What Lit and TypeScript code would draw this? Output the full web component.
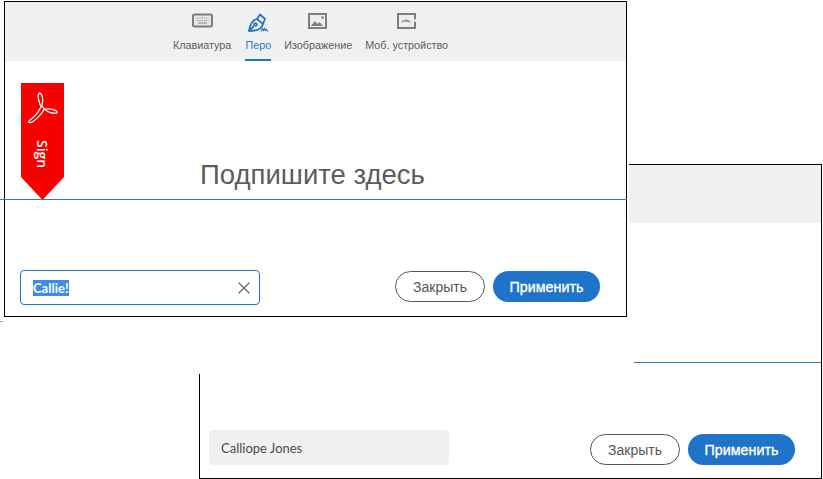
import { LitElement, html, css, svg } from "lit";
import { customElement } from "lit/decorators.js";

const icons: Record<string, unknown> = {
  kb: svg`<rect x="1" y="1.5" width="19" height="12" rx="1.5" fill="#e8e8e8" stroke="#7d7d7d" stroke-width="2"/><path d="M4.5 5h12M4.5 7.5h12" stroke="#999" stroke-width="1.2" stroke-dasharray="1.2 .7"/><path d="M6 10h9" stroke="#999" stroke-width="1.2"/>`,
  pen: svg`<g fill="none" stroke="#2b73c4" stroke-width="1.8" stroke-linejoin="round"><path d="M1 18C2 11 5 7 9 6L15 11C14 15 10 18 1 18Z"/><path d="M1 18l5-5"/><circle cx="7.5" cy="11.5" r="1.4"/><path d="M9 6L12 1.5L17 6L15 11"/></g><path d="M13 18.5l1.5-3 1 2 1-2 1 2 1-1 1.5 2" fill="none" stroke="#2b73c4" stroke-width="1.2"/>`,
  img: svg`<rect x="1" y="1" width="17" height="14" fill="#eee" stroke="#7d7d7d" stroke-width="2"/><path d="M3 13l4-5 2.5 3 2-2 3.5 4z" fill="#7d7d7d"/><circle cx="14.5" cy="4.5" r="1.3" fill="#7d7d7d"/>`,
  tab: svg`<rect x="2" y="1" width="17" height="14" fill="#eee" stroke="#7d7d7d" stroke-width="2"/><path d="M6 9.5l1.5-2.5 1 2 1.5-2.5 1 2.5 1-2 1 2 1.5-.5" fill="none" stroke="#7d7d7d" stroke-width="1"/><rect x="18" y="6" width="2" height="3" fill="#ddd"/>`,
};

@customElement("app-root")
export class AppRoot extends LitElement {
  static styles = css`
    :host { display: block; position: relative; width: 823px; height: 479px; overflow: hidden; background: #fff; font-family: "Liberation Sans", Arial, sans-serif; }
    .win { position: absolute; box-sizing: border-box; background: #fff; }
    .back { left: 199px; top: 164px; width: 623px; height: 315px; border: 1px solid #000; display: flex; flex-direction: column; }
    .back-head { height: 58px; flex: none; background: #f0f0f0; }
    .back-foot { margin-top: auto; display: flex; align-items: flex-end; justify-content: space-between; padding: 0 26px 13px 9px; }
    .mask { position: absolute; left: 199px; top: 164px; width: 430px; height: 210px; background: #fff; }
    .line { position: absolute; height: 1px; background: #2a7ab8; }
    .l1 { left: 0; top: 199px; width: 627px; z-index: 2; }
    .l2 { left: 634px; top: 362px; width: 187px; }
    .tick { position: absolute; left: 0; top: 321px; width: 3px; height: 1px; background: #999; }
    .front { left: 4px; top: 1px; width: 623px; height: 316px; border: 1px solid #000; display: flex; flex-direction: column; }
    .head { height: 59px; flex: none; background: #f0f0f0; display: flex; justify-content: center; gap: 13px; padding-right: 10px; box-sizing: border-box; }
    .tab { display: flex; flex-direction: column; align-items: center; font-size: 10.8px; color: #5c5c5c; height: 59px; box-sizing: border-box; border-bottom: 2px solid transparent; }
    .tab:first-child { margin-right: 1px; }
    .tab.on { color: #2b73c4; border-bottom-color: #1f73c7; }
    .ic { height: 20px; width: 21px; margin-top: 11px; }
    .tab span { margin-top: 6px; white-space: nowrap; }
    .main { flex: 1; position: relative; display: flex; flex-direction: column; }
    .sign { position: absolute; left: 16px; top: 22px; width: 43px; height: 117px; }
    .sign svg { position: absolute; inset: 0; }
    .sign b { position: absolute; left: 0; right: 0; top: 57px; display: flex; align-items: center; writing-mode: vertical-rl; font: 600 14px "Open Sans", sans-serif; color: #fff; }
    .hint { text-align: center; font-size: 27.5px; color: #5c5c5c; margin-top: 97px; line-height: 34px; padding-right: 6px; }
    .foot { margin-top: auto; display: flex; align-items: flex-end; justify-content: space-between; padding: 0 26px 11px 15px; }
    .foot .btns { margin-bottom: 3px; }
    .field { box-sizing: border-box; width: 240px; height: 35px; border-radius: 4px; display: flex; align-items: center; padding: 0 9px 0 12px; font: 13px Lato, sans-serif; color: #4b4b4b; }
    .field.edit { border: 1px solid #1f73c7; }
    .field.plain { background: #f0f0f0; }
    .field mark { background: #3d8af0; color: #fff; font-weight: 700; line-height: 16px; }
    .field svg { margin-left: auto; }
    .btns { display: flex; gap: 8px; }
    button { box-sizing: border-box; height: 31px; border-radius: 16px; font: 14px "Liberation Sans", Arial, sans-serif; padding: 0; }
    .ghost { width: 90px; background: #fff; border: 1px solid #555; color: #555; }
    .primary { width: 107px; background: #1f73c9; border: 0; color: #fff; font-size: 14.3px; -webkit-text-stroke: .35px #fff; }
  `;

  private buttons() {
    return html`<div class="btns"><button class="ghost">Закрыть</button><button class="primary">Применить</button></div>`;
  }

  private tab(key: string, label: string, on = false) {
    return html`<div class="tab ${on ? "on" : ""}"><svg class="ic" viewBox="0 0 21 20">${icons[key]}</svg><span>${label}</span></div>`;
  }

  render() {
    return html`
      <div class="win back">
        <div class="back-head"></div>
        <div class="back-foot">
          <div class="field plain">Calliope Jones</div>
          ${this.buttons()}
        </div>
      </div>
      <div class="mask"></div>
      <div class="line l2"></div>
      <div class="tick"></div>
      <div class="win front">
        <div class="head">
          ${this.tab("kb", "Клавиатура")}
          ${this.tab("pen", "Перо", true)}
          ${this.tab("img", "Изображение")}
          ${this.tab("tab", "Моб. устройство")}
        </div>
        <div class="main">
          <div class="sign">
            <svg viewBox="0 0 43 117" width="43" height="117">
              <path d="M0 0H43V94L21.5 117L0 94Z" fill="#f60000"/>
              <path d="M19 10C16 10.5 17 17 20 24C17 30 12 35 8.5 37.5C6 39.5 9 40.5 12 38.5C17 35 21 30 23 26.5C27 25 34 26.5 36 28.5C37 30.5 33 30.5 29 29.5C26 28.5 23 26 21 23C22 18 22 12 19 10Z" fill="none" stroke="#fff" stroke-width="1.3"/>
            </svg>
            <b>Sign</b>
          </div>
          <div class="hint">Подпишите здесь</div>
          <div class="foot">
            <div class="field edit">
              <mark>Callie!</mark>
              <svg width="12" height="12" viewBox="0 0 12 12"><path d="M.5.5l11 11M11.5.5l-11 11" stroke="#666" stroke-width="1.2" fill="none"/></svg>
            </div>
            ${this.buttons()}
          </div>
        </div>
      </div>
      <div class="line l1"></div>
    `;
  }
}
